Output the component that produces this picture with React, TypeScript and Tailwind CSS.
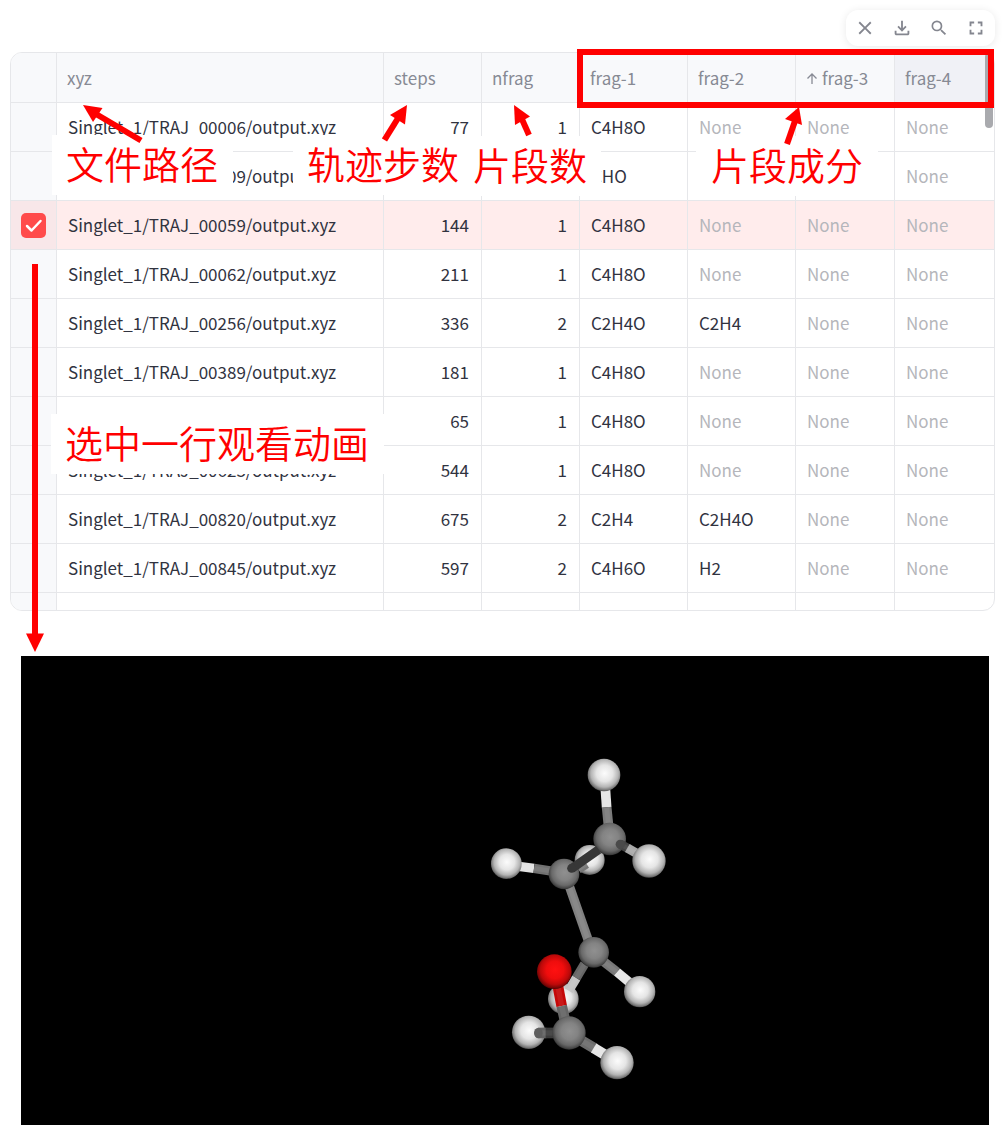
import React from "react";
import { MdClose, MdSearch, MdFullscreen } from "react-icons/md";

type Row = { path: string; steps: string; nfrag: string; frags: string[]; selected?: boolean };

const rows: Row[] = [
  { path: "Singlet_1/TRAJ_00006/output.xyz", steps: "77", nfrag: "1", frags: ["C4H8O", "None", "None", "None"] },
  { path: "Singlet_1/TRAJ_00009/output.xyz", steps: "", nfrag: "", frags: ["CHO", "", "", "None"] },
  { path: "Singlet_1/TRAJ_00059/output.xyz", steps: "144", nfrag: "1", frags: ["C4H8O", "None", "None", "None"], selected: true },
  { path: "Singlet_1/TRAJ_00062/output.xyz", steps: "211", nfrag: "1", frags: ["C4H8O", "None", "None", "None"] },
  { path: "Singlet_1/TRAJ_00256/output.xyz", steps: "336", nfrag: "2", frags: ["C2H4O", "C2H4", "None", "None"] },
  { path: "Singlet_1/TRAJ_00389/output.xyz", steps: "181", nfrag: "1", frags: ["C4H8O", "None", "None", "None"] },
  { path: "", steps: "65", nfrag: "1", frags: ["C4H8O", "None", "None", "None"] },
  { path: "Singlet_1/TRAJ_00623/output.xyz", steps: "544", nfrag: "1", frags: ["C4H8O", "None", "None", "None"] },
  { path: "Singlet_1/TRAJ_00820/output.xyz", steps: "675", nfrag: "2", frags: ["C2H4", "C2H4O", "None", "None"] },
  { path: "Singlet_1/TRAJ_00845/output.xyz", steps: "597", nfrag: "2", frags: ["C4H6O", "H2", "None", "None"] },
];

const line = "border-[#e6e7ea]";

function Toolbar() {
  const button = "flex size-[22px] items-center justify-center text-[#84868f]";
  return (
    <div className="flex h-9 items-center gap-[15px] rounded-xl bg-white px-2 shadow-[0_1px_8px_rgba(0,0,0,0.09)]">
      <button type="button" aria-label="Clear selection" className={button}>
        <MdClose size={22} />
      </button>
      <button type="button" aria-label="Download" className={button}>
        <svg width="22" height="22" viewBox="0 -960 960 960" fill="currentColor">
          <path d="M480-320 280-520l56-58 104 104v-326h80v326l104-104 56 58-200 200ZM240-160q-33 0-56.500-23.500T160-240v-120h80v120h480v-120h80v120q0 33-23.500 56.500T720-160H240Z" />
        </svg>
      </button>
      <button type="button" aria-label="Search" className={button}>
        <MdSearch size={20} />
      </button>
      <button type="button" aria-label="Fullscreen" className={button}>
        <MdFullscreen size={22} />
      </button>
    </div>
  );
}

function HeaderCell({ children, active }: { children: React.ReactNode; active?: boolean }) {
  return (
    <th
      className={`border-r border-b px-[10px] pt-px text-left font-normal text-[#878a94] last:border-r-0 ${line} ${
        active ? "bg-[#f0f1f6]" : "bg-[#f8f9fb]"
      }`}
    >
      {children}
    </th>
  );
}

function DataTable() {
  return (
    <div className={`relative h-[559px] overflow-hidden rounded-xl border ${line}`}>
      <table className="w-full table-fixed border-separate border-spacing-0 whitespace-nowrap text-[17px] leading-6 text-[#31333f]">
        <colgroup>
          <col className="w-[46px]" />
          <col />
          <col className="w-[98px]" />
          <col className="w-[98px]" />
          <col className="w-[108px]" />
          <col className="w-[108px]" />
          <col className="w-[99px]" />
          <col className="w-[99px]" />
        </colgroup>
        <thead>
          <tr className="h-[50px]">
            <HeaderCell>{""}</HeaderCell>
            <HeaderCell>xyz</HeaderCell>
            <HeaderCell>steps</HeaderCell>
            <HeaderCell>nfrag</HeaderCell>
            <HeaderCell>frag-1</HeaderCell>
            <HeaderCell>frag-2</HeaderCell>
            <HeaderCell>
              <span className="flex items-center gap-1">
                <svg width="12" height="12" viewBox="0 0 12 12" fill="none" stroke="currentColor" strokeWidth="1.300">
                  <path d="M6 12V2M1.500 6.500 6 2l4.500 4.500" />
                </svg>
                frag-3
              </span>
            </HeaderCell>
            <HeaderCell active>frag-4</HeaderCell>
          </tr>
        </thead>
        <tbody>
          {rows.map((row, i) => (
            <tr key={i} className={`h-[49px] ${row.selected ? "bg-[#ffecec]" : "bg-white"}`}>
              <td className={`border-r border-b p-0 ${line} ${row.selected ? "bg-[#f8e7e9]" : "bg-[#f8f9fb]"}`}>
                {row.selected && (
                  <label className="relative mx-auto block size-[25px]">
                    <input
                      type="checkbox"
                      defaultChecked
                      aria-label={`Select ${row.path}`}
                      className="block size-[25px] appearance-none rounded-[5px] bg-[#ff4b4b]"
                    />
                    <svg
                      className="pointer-events-none absolute inset-0"
                      viewBox="0 0 25 25"
                      fill="none"
                      stroke="white"
                      strokeWidth="2.500"
                      strokeLinecap="round"
                      strokeLinejoin="round"
                    >
                      <path d="m6 13 4.500 4.500L19.500 8" />
                    </svg>
                  </label>
                )}
              </td>
              <td className={`border-r border-b px-[11px] ${line}`}>{row.path}</td>
              <td className={`border-r border-b px-3 text-right ${line}`}>{row.steps}</td>
              <td className={`border-r border-b px-3 text-right ${line}`}>{row.nfrag}</td>
              {row.frags.map((f, j) => (
                <td
                  key={j}
                  className={`border-r border-b px-[11px] last:border-r-0 ${line} ${f === "None" ? "text-[#b5b6bb]" : ""}`}
                >
                  {f}
                </td>
              ))}
            </tr>
          ))}
          <tr className="h-[49px]">
            <td className={`border-r bg-[#f8f9fb] ${line}`} />
            {Array.from({ length: 7 }, (_, i) => (
              <td key={i} className={`border-r last:border-r-0 ${line}`} />
            ))}
          </tr>
        </tbody>
      </table>
      <div className="absolute top-0 right-px h-[75px] w-2 rounded-full bg-[#a9aaae]" />
    </div>
  );
}

function Note({ className, children }: { className: string; children: React.ReactNode }) {
  return (
    <div className={`absolute bg-white pb-1 text-[38px] leading-[56px] font-[350] whitespace-nowrap text-[#ff0000] ${className}`}>
      {children}
    </div>
  );
}

function Arrow({ className, w, h, shaft, head }: { className: string; w: number; h: number; shaft: string; head: string }) {
  return (
    <svg className={`absolute ${className}`} width={w} height={h} viewBox={`0 0 ${w} ${h}`} aria-hidden="true">
      <path d={shaft} stroke="#ff0000" strokeWidth="6" />
      <path d={head} fill="#ff0000" />
    </svg>
  );
}

function Annotations() {
  return (
    <>
      <Note className="top-[83px] left-[42px] w-[181px] pl-[14px]">文件路径</Note>
      <Note className="top-[83px] left-[283px] w-[166px] pl-[14px]">轨迹步数</Note>
      <Note className="top-[84px] left-[448px] w-[143px] pl-[15px]">片段数</Note>
      <Note className="top-[84px] right-[117px] w-[182px] pl-[15px]">片段成分</Note>
      <Note className="top-[362px] left-[41px] w-[333px] pl-[14px]">选中一行观看动画</Note>
      <div className="absolute -top-[3px] right-px h-[59px] w-[417px] border-6 border-[#ff0000]" />
      <Arrow className="top-[52px] left-[72px]" w={64} h={40} shaft="M14 10 59 36.500" head="M1 1 20.500 4 11 18Z" />
      <Arrow className="top-[52px] left-[372px]" w={28} h={40} shaft="M2.500 36 18 11" head="M25 1 23 20.500 8 11Z" />
      <Arrow className="top-[52px] left-[502px]" w={24} h={36} shaft="M17 31 9 13" head="M2 1 18 12.500 3 21Z" />
      <Arrow className="top-[53px] right-[192px]" w={24} h={44} shaft="M8 39 16 16" head="M20 2 6 14 23 20Z" />
      <Arrow className="top-[212px] left-[16px]" w={18} h={388} shaft="M9 0V371" head="M0 369.500H18L9 388Z" />
    </>
  );
}

type Bond = [number, number, number, number, string, number];

function Bonds({ items }: { items: Bond[] }) {
  return (
    <>
      {items.map(([x1, y1, x2, y2, color, w], i) => (
        <g key={i}>
          <line x1={x1} y1={y1} x2={x2} y2={y2} stroke={color} strokeWidth={w} />
          <line x1={x1} y1={y1} x2={x2} y2={y2} stroke="#fff" strokeOpacity="0.07" strokeWidth={w / 2} />
        </g>
      ))}
    </>
  );
}

function Atom({ x, y, r, kind }: { x: number; y: number; r: number; kind: "H" | "C" | "O" }) {
  return <circle cx={x} cy={y} r={r} fill={`url(#atom${kind})`} />;
}

function Molecule() {
  return (
    <svg viewBox="0 0 968 469" className="block w-full bg-black" role="img" aria-label="C4H8O trajectory">
      <defs>
        <radialGradient id="atomH" cx="0.52" cy="0.45" r="0.56">
          <stop offset="0" stopColor="#fcfcfc" />
          <stop offset="0.45" stopColor="#e5e5e5" />
          <stop offset="0.75" stopColor="#b4b4b4" />
          <stop offset="0.92" stopColor="#757575" />
          <stop offset="1" stopColor="#404040" />
        </radialGradient>
        <radialGradient id="atomC" cx="0.52" cy="0.45" r="0.56">
          <stop offset="0" stopColor="#909090" />
          <stop offset="0.45" stopColor="#838383" />
          <stop offset="0.75" stopColor="#696969" />
          <stop offset="0.92" stopColor="#444" />
          <stop offset="1" stopColor="#262626" />
        </radialGradient>
        <radialGradient id="atomO" cx="0.52" cy="0.45" r="0.56">
          <stop offset="0" stopColor="#ff1111" />
          <stop offset="0.45" stopColor="#ef0d0d" />
          <stop offset="0.75" stopColor="#bd0909" />
          <stop offset="0.92" stopColor="#7a0505" />
          <stop offset="1" stopColor="#450303" />
        </radialGradient>
      </defs>
      <g transform="translate(449 84) scale(0.3333)">
        <Atom x={359} y={360} r={45} kind="H" />
        <Bonds items={[[325, 388, 350, 372, "#777", 26]]} />
        <Bonds
          items={[
            [406, 145, 410, 202, "#e6e6e6", 29],
            [410, 202, 416, 262, "#7b7b7b", 29],
            [135, 378, 192, 385, "#e2e2e2", 28],
            [192, 385, 250, 394, "#717171", 28],
          ]}
        />
        <Atom x={402} y={105} r={49} kind="H" />
        <Atom x={109} y={371} r={46} kind="H" />
        <Atom x={419} y={297} r={49} kind="C" />
        <Bonds items={[[295, 430, 358, 610, "#808080", 28]]} />
        <Atom x={282} y={402} r={46} kind="C" />
        <line x1="305" y1="386" x2="386" y2="329" stroke="#373737" strokeWidth="27" />
        <circle cx="305" cy="385" r="13.500" fill="#373737" />
        <Bonds
          items={[
            [450, 312, 477, 327, "#444", 28],
            [472, 324, 510, 346, "#a9a9a9", 28],
          ]}
        />
        <circle cx="451" cy="313" r="14" fill="#4a4a4a" />
        <Atom x={537} y={363} r={50} kind="H" />
        <Atom x={280} y={777} r={46} kind="H" />
        <Bonds
          items={[
            [344, 672, 319, 714, "#666", 28],
            [319, 714, 296, 752, "#c4c4c4", 28],
            [395, 660, 441, 696, "#777", 28],
            [441, 696, 482, 730, "#e6e6e6", 28],
          ]}
        />
        <Atom x={371} y={637} r={46} kind="C" />
        <Atom x={509} y={755} r={47} kind="H" />
        <Bonds
          items={[
            [263, 735, 275, 798, "#c50808", 32],
            [275, 798, 287, 850, "#656565", 32],
          ]}
        />
        <Atom x={253} y={695} r={52} kind="O" />
        <Atom x={176} y={877} r={50} kind="H" />
        <Bonds
          items={[
            [205, 879, 229, 879, "#636363", 32],
            [227, 879, 262, 879, "#3c3c3c", 32],
          ]}
        />
        <ellipse cx="205" cy="879" rx="13" ry="16" fill="#5f5f5f" />
        <Bonds
          items={[
            [328, 898, 375, 926, "#6c6c6c", 32],
            [371, 924, 416, 951, "#e6e6e6", 32],
          ]}
        />
        <Atom x={297} y={879} r={50} kind="C" />
        <Atom x={441} y={968} r={50} kind="H" />
      </g>
    </svg>
  );
}

export default function App() {
  return (
    <main className="bg-white pt-[10px] pr-[11px] pl-[10px] font-['Noto_Sans_CJK_SC',sans-serif]">
      <div className="mb-[6px] flex justify-end">
        <Toolbar />
      </div>
      <section className="relative">
        <DataTable />
        <Annotations />
      </section>
      <section className="mt-[45px] mr-[6px] ml-[11px]">
        <Molecule />
      </section>
    </main>
  );
}
